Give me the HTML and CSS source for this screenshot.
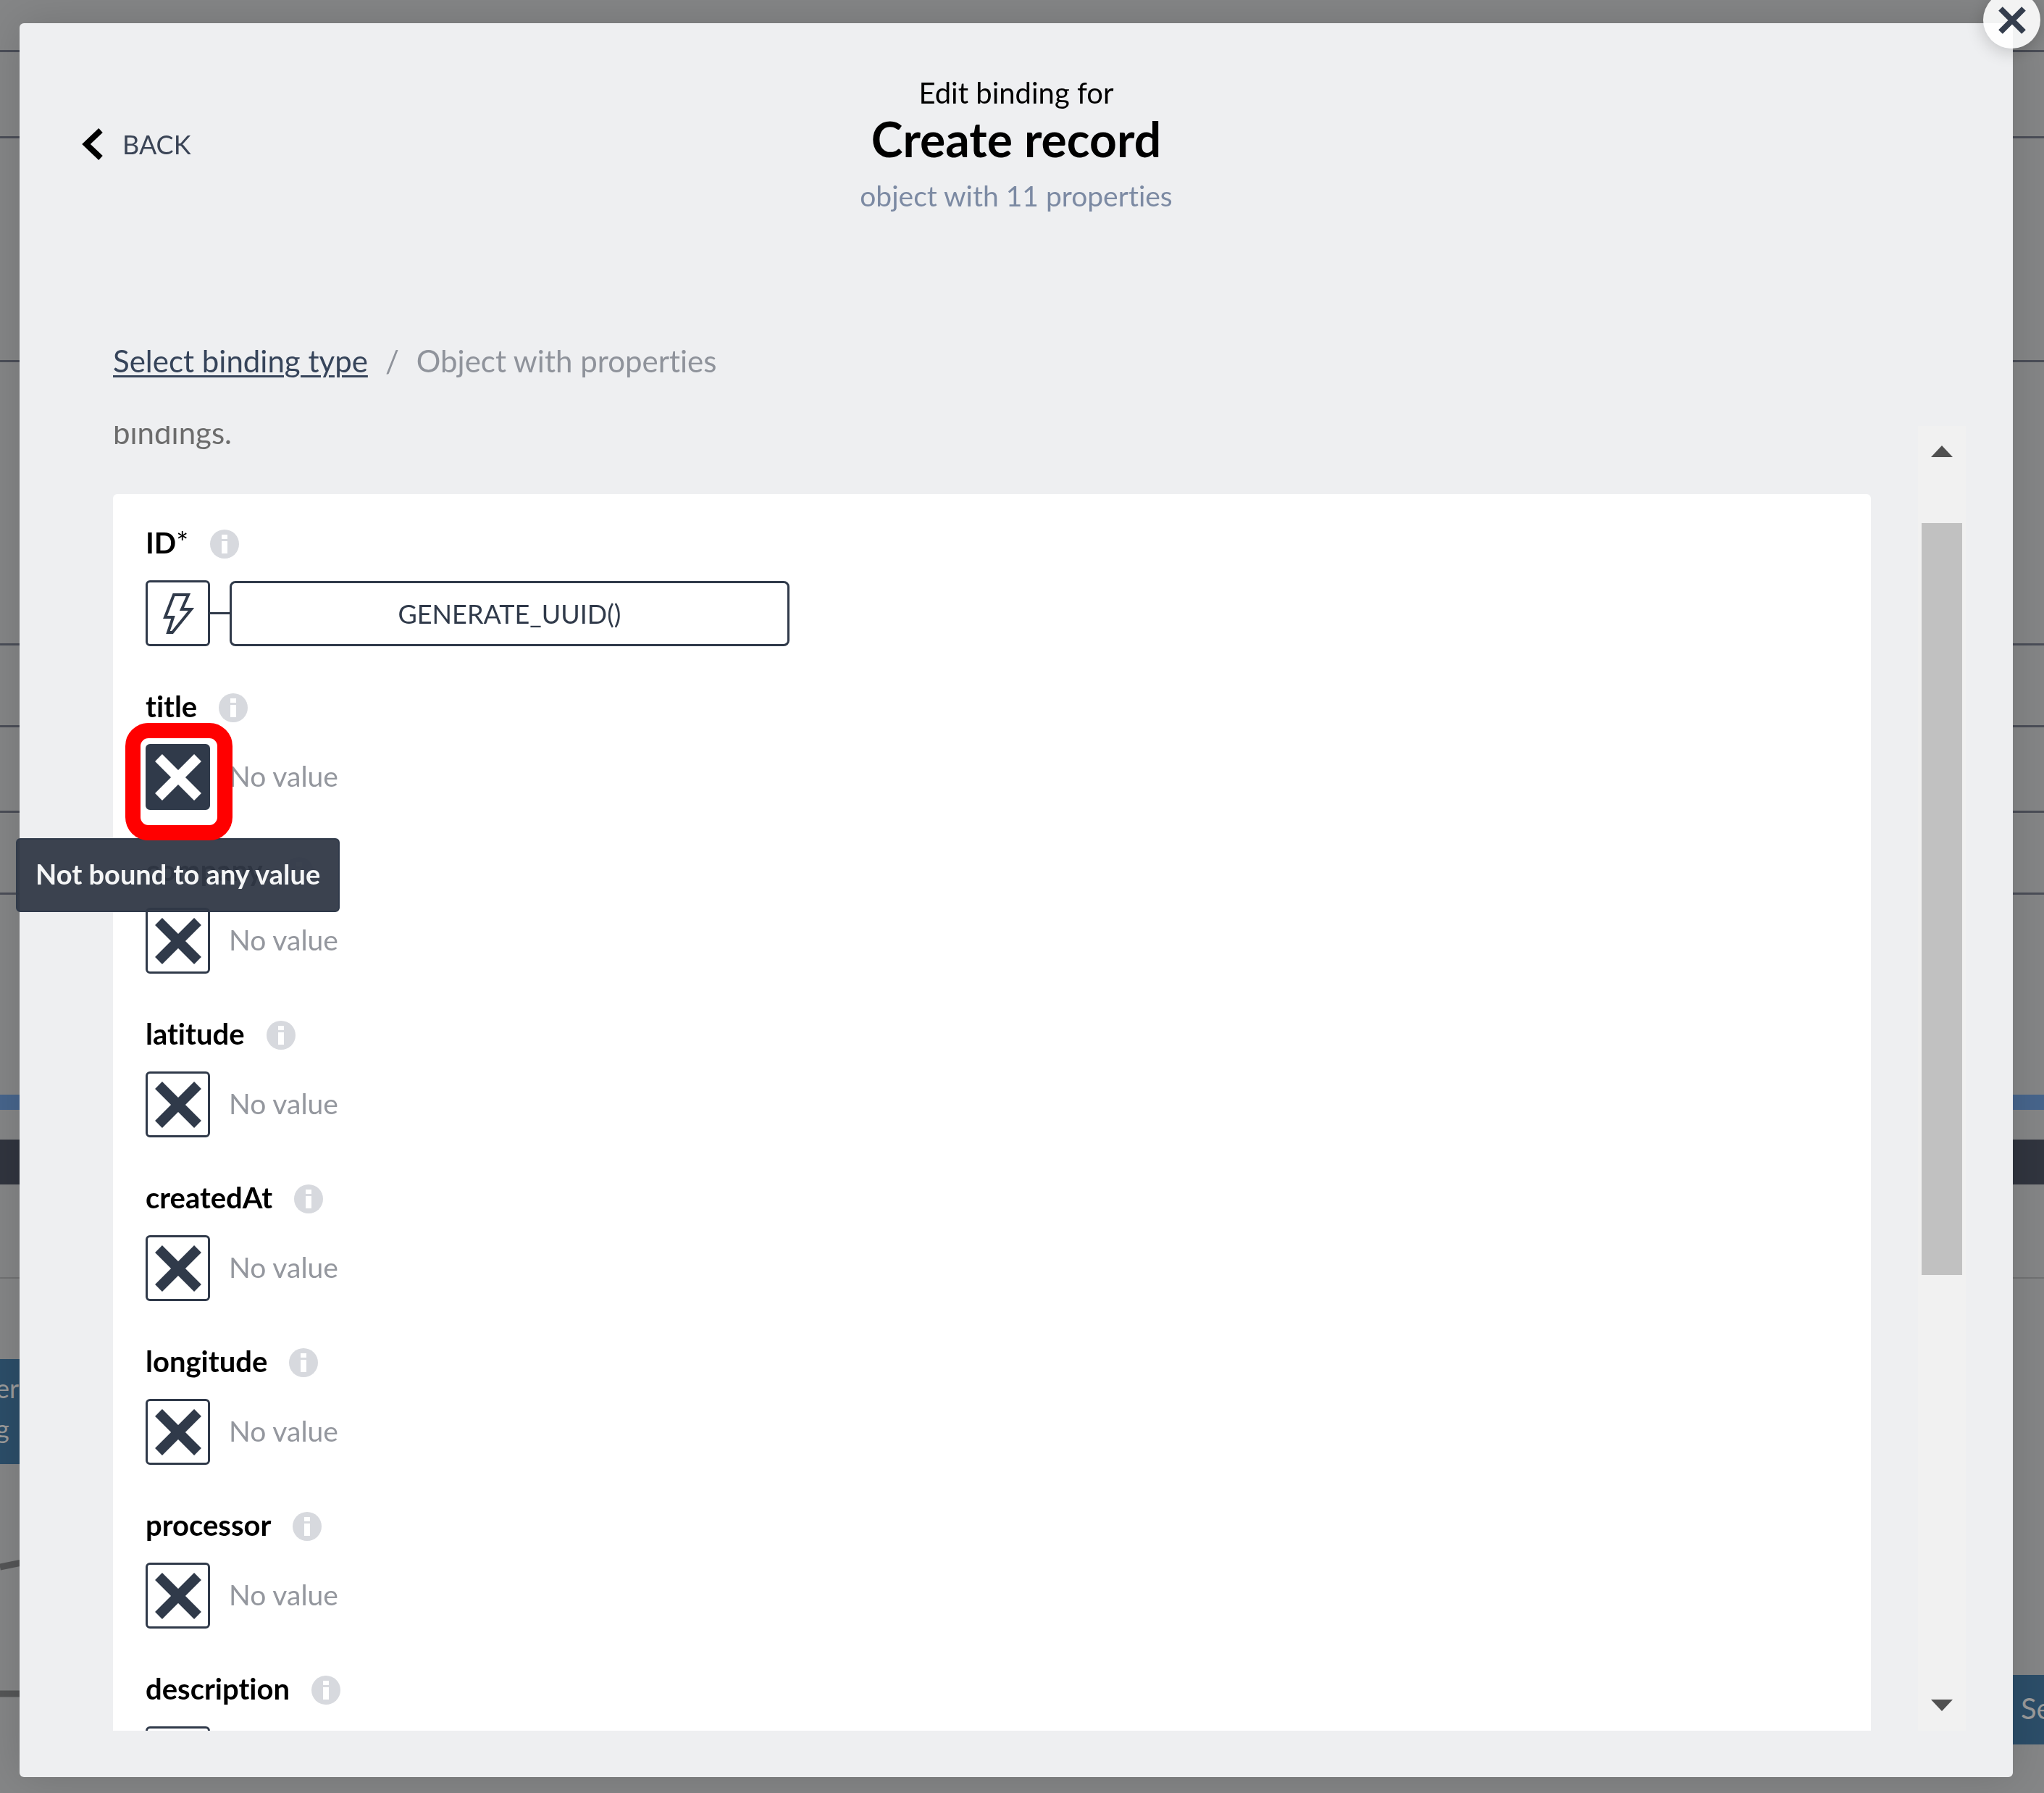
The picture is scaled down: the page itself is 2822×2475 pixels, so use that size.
FILE: index.html
```
<!DOCTYPE html>
<html lang="en">
<head>
<meta charset="utf-8">
<meta name="viewport" content="width=device-width, initial-scale=1">
<title>Edit binding for Create record</title>
<link rel="stylesheet" href="styles.css">
</head>
<body>
<svg class="sprite" aria-hidden="true">
  <symbol id="cross" viewBox="0 0 66 66"><path d="M6 6 60 60M60 6 6 60" fill="none" stroke="currentColor" stroke-width="14"/></symbol>
  <symbol id="info" viewBox="0 0 40 40"><circle cx="20" cy="20" r="20" fill="#d7d9de"/><path d="M16 7h8v6h-8zM16 16h8v17h-8z" fill="#fff"/></symbol>
</svg>

<div class="workspace" aria-hidden="true">
  <div class="line line-1"></div>
  <div class="line line-2"></div>
  <div class="line line-3"></div>
  <div class="line line-4"></div>
  <div class="line line-5"></div>
  <div class="line line-6"></div>
  <div class="line line-7"></div>
  <div class="accent-bar"></div>
  <div class="dark-bar"></div>
  <div class="canvas">
    <div class="node node-left"><span>er</span><span>g</span></div>
    <svg class="wires" width="40" height="220" viewBox="0 0 40 220"><path d="M0 28 40 20M0 203H40" fill="none" stroke="#555657" stroke-width="9"/></svg>
    <div class="node node-right">Se</div>
  </div>
</div>

<div class="overlay">
  <main class="modal" role="dialog" aria-labelledby="dialog-title">
    <header class="header">
      <button class="back" type="button">
        <svg width="30" height="46" viewBox="0 0 30 46" aria-hidden="true"><path d="M26 4 6 23 26 42" fill="none" stroke="#000" stroke-width="8"/></svg>
        BACK
      </button>
      <div class="heading">
        <p class="eyebrow">Edit binding for</p>
        <h1 class="title" id="dialog-title">Create record</h1>
        <p class="subtitle">object with 11 properties</p>
      </div>
    </header>

    <nav class="crumbs" aria-label="Breadcrumb">
      <a href="#">Select binding type</a>
      <span class="slash">/</span>
      <span>Object with properties</span>
    </nav>

    <div class="body">
      <div class="scroller">
        <p class="intro">bindings.</p>
        <section class="panel">
          <div class="field">
            <div class="name"><label for="f-id">ID<span class="star">*</span></label><svg class="info"><use href="#info"/></svg></div>
            <div class="value">
              <button class="bind" id="f-id" type="button"><svg width="44" height="60" viewBox="0 0 44 60" aria-hidden="true"><path d="M16 4H36L27 24H40L14 56H8L15 35H4Z" fill="none" stroke="currentColor" stroke-width="4"/></svg></button>
              <span class="link"></span>
              <button class="formula" type="button">GENERATE_UUID()</button>
            </div>
          </div>
          <div class="field">
            <div class="name"><label for="f-title">title</label><svg class="info"><use href="#info"/></svg></div>
            <div class="value"><button class="bind active" id="f-title" type="button" aria-label="title binding"><svg class="cross"><use href="#cross"/></svg></button><span class="empty">No value</span></div>
          </div>
          <div class="field">
            <div class="name"><label for="f-company">company</label><svg class="info"><use href="#info"/></svg></div>
            <div class="value"><button class="bind" id="f-company" type="button" aria-label="company binding"><svg class="cross"><use href="#cross"/></svg></button><span class="empty">No value</span></div>
          </div>
          <div class="field">
            <div class="name"><label for="f-latitude">latitude</label><svg class="info"><use href="#info"/></svg></div>
            <div class="value"><button class="bind" id="f-latitude" type="button" aria-label="latitude binding"><svg class="cross"><use href="#cross"/></svg></button><span class="empty">No value</span></div>
          </div>
          <div class="field">
            <div class="name"><label for="f-created">createdAt</label><svg class="info"><use href="#info"/></svg></div>
            <div class="value"><button class="bind" id="f-created" type="button" aria-label="createdAt binding"><svg class="cross"><use href="#cross"/></svg></button><span class="empty">No value</span></div>
          </div>
          <div class="field">
            <div class="name"><label for="f-longitude">longitude</label><svg class="info"><use href="#info"/></svg></div>
            <div class="value"><button class="bind" id="f-longitude" type="button" aria-label="longitude binding"><svg class="cross"><use href="#cross"/></svg></button><span class="empty">No value</span></div>
          </div>
          <div class="field">
            <div class="name"><label for="f-processor">processor</label><svg class="info"><use href="#info"/></svg></div>
            <div class="value"><button class="bind" id="f-processor" type="button" aria-label="processor binding"><svg class="cross"><use href="#cross"/></svg></button><span class="empty">No value</span></div>
          </div>
          <div class="field">
            <div class="name"><label for="f-description">description</label><svg class="info"><use href="#info"/></svg></div>
            <div class="value"><button class="bind" id="f-description" type="button" aria-label="description binding"></button></div>
          </div>
        </section>
      </div>
      <div class="scrollbar">
        <button class="arrow" type="button" aria-label="Scroll up"><svg width="30" height="16" viewBox="0 0 30 16"><path d="M0 16 15 0 30 16Z" fill="#505050"/></svg></button>
        <div class="track"><div class="thumb"></div></div>
        <button class="arrow" type="button" aria-label="Scroll down"><svg width="30" height="16" viewBox="0 0 30 16"><path d="M0 0H30L15 16Z" fill="#505050"/></svg></button>
      </div>
    </div>

    <div class="tooltip" role="tooltip">Not bound to any value</div>
    <div class="marker"></div>
    <button class="close" type="button" aria-label="Close"><svg width="40" height="40" viewBox="0 0 40 40"><path d="M4 4 36 36M36 4 4 36" fill="none" stroke="#343d4d" stroke-width="8"/></svg></button>
  </main>
</div>
</body>
</html>
```
FILE: styles.css
```
* { box-sizing: border-box; }

body {
  margin: 0;
  height: 100vh;
  overflow: hidden;
  font-family: Lato, "Liberation Sans", sans-serif;
  font-size: 40px;
  line-height: 48px;
  font-variant-ligatures: none;
  color: #000;
  background: #858687;
}

p, h1 { margin: 0; }

button {
  margin: 0;
  padding: 0;
  border: 0;
  background: none;
  font: inherit;
  color: inherit;
}

.sprite { display: none; }

/* Dimmed page behind the dialog */
.workspace {
  display: flex;
  flex-direction: column;
  height: 100vh;
}

.line { flex: none; border-bottom: 3px solid #4b4e58; }
.line-1 { height: 72px; }
.line-2 { height: 119px; }
.line-3 { height: 309px; }
.line-4 { height: 391px; }
.line-5 { height: 113px; }
.line-6 { height: 118px; }
.line-7 { height: 113px; }

.accent-bar { flex: none; height: 21px; margin-top: 276px; background: #47658c; }
.dark-bar { flex: none; height: 62px; margin-top: 41px; background: #31353f; }

.canvas {
  position: relative;
  flex: 1;
  margin-top: 128px;
  border-top: 2px solid #717273;
}

.node {
  position: absolute;
  background: #2c4e69;
  color: #9b9b9b;
}

.node-left {
  left: -20px;
  top: 111px;
  display: flex;
  flex-direction: column;
  width: 80px;
  height: 145px;
  padding: 12px 0 0 14px;
  line-height: 56px;
  font-size: 36px;
}

.node-right {
  right: -60px;
  top: 547px;
  width: 110px;
  height: 96px;
  padding: 22px 18px;
}

.wires { position: absolute; left: 0; top: 370px; }

/* Dialog */
.overlay {
  position: fixed;
  inset: 0;
  display: flex;
  padding: 32px 43px 22px 27px;
}

.modal {
  position: relative;
  flex: 1;
  display: flex;
  flex-direction: column;
  padding: 72px 65px 64px 129px;
  border-radius: 6px;
  background: #eeeff1;
  box-shadow: 0 0 60px rgba(0, 0, 0, 0.15);
}

.header {
  display: grid;
  grid-template-columns: 1fr auto 1fr;
  margin: 0 21px 0 -43px;
}

.back {
  display: flex;
  align-items: center;
  justify-self: start;
  gap: 26px;
  height: 46px;
  margin-top: 72px;
  font-size: 36px;
  color: #3a4456;
}

.heading { text-align: center; }

.title {
  font-size: 66px;
  line-height: 80px;
  font-weight: 700;
}

.subtitle { margin-top: 14px; font-size: 39px; color: #7c8aa3; }

.crumbs {
  display: flex;
  gap: 24px;
  margin-top: 179px;
  font-size: 42px;
  line-height: 50px;
  color: #8f939b;
}

.crumbs a {
  color: #36445a;
  text-decoration-thickness: 3px;
  text-underline-offset: 4px;
}

.body {
  display: flex;
  flex: 1;
  gap: 65px;
  min-height: 0;
  margin-top: 65px;
}

.scroller { flex: 1; overflow: hidden; }

/* The list is scrolled partway, so the intro is cut at the top */
.intro {
  margin: -16px 0 60px;
  font-size: 42px;
  line-height: 50px;
  color: #6c6c6c;
}

.panel {
  display: flex;
  flex-direction: column;
  gap: 59px;
  padding: 43px 45px;
  border-radius: 6px;
  background: #fff;
}

.name {
  display: flex;
  align-items: center;
  gap: 30px;
  height: 48px;
  font-weight: 700;
}

.star { font-weight: 400; }

.info { width: 40px; height: 40px; margin-top: 4px; }

.value {
  display: flex;
  align-items: center;
  margin-top: 28px;
}

.bind {
  display: flex;
  align-items: center;
  justify-content: center;
  width: 89px;
  height: 91px;
  border: 3px solid #303a4a;
  border-radius: 6px;
  background: #fff;
  color: #303a4a;
}

.bind.active { background: #303a4a; color: #fff; }

.cross { width: 66px; height: 66px; }

.link { width: 27px; height: 3px; background: #303a4a; }

.formula {
  width: 773px;
  height: 90px;
  border: 3px solid #303a4a;
  border-radius: 8px;
  font-size: 36px;
  color: #303a4a;
}

.empty { margin-left: 26px; padding-bottom: 4px; font-size: 39px; color: #94979e; }

.scrollbar {
  display: flex;
  flex-direction: column;
  width: 66px;
  background: #f1f1f1;
}

.arrow {
  display: flex;
  align-items: center;
  justify-content: center;
  height: 70px;
}

.track { flex: 1; padding: 64px 5px 0; }
.thumb { height: 65%; background: #c1c1c1; }

/* Layers over the dialog */
.tooltip {
  position: absolute;
  left: -5px;
  top: 1125px;
  padding: 23px 25px 27px;
  border: 2px solid #303a4a;
  border-radius: 6px;
  background: rgba(48, 56, 70, 0.95);
  color: #f4f5f6;
  font-size: 38px;
  font-weight: 700;
}

.marker {
  position: absolute;
  left: 146px;
  top: 966px;
  width: 148px;
  height: 162px;
  border: 21px solid #f00;
  border-radius: 32px;
}

.close {
  position: absolute;
  right: -38px;
  top: -44px;
  display: flex;
  align-items: center;
  justify-content: center;
  width: 79px;
  height: 79px;
  border-radius: 50%;
  background: rgba(255, 255, 255, 0.9);
  box-shadow: 0 4px 24px rgba(0, 0, 0, 0.2);
}
```
